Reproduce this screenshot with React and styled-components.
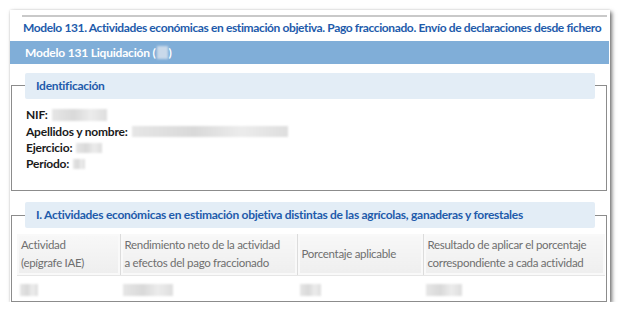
import React from 'react';
import styled, { createGlobalStyle } from 'styled-components';

const GlobalStyle = createGlobalStyle`
  html, body {
    margin: 0;
    padding: 0;
    background: #ffffff;
  }
  body {
    font-family: Lato, "Open Sans", "Noto Sans", sans-serif;
  }
`;

const Card = styled.div`
  margin: 10px 0 0 10px;
  width: 600px;
  height: 292px;
  background: #fff;
  box-shadow: 2px 2px 4px rgba(0, 0, 0, 0.55), 0 0 2px rgba(0, 0, 0, 0.12);
  overflow: hidden;
  display: flex;
  flex-direction: column;
`;

const TopRule = styled.div`
  margin: 5px 3px 0 12px;
  height: 2px;
  background: #c9c9c9;
`;

const PageTitle = styled.h1`
  margin: 0;
  padding: 0 0 0 13px;
  height: 25px;
  line-height: 21px;
  font-size: 12px;
  letter-spacing: -0.38px;
  font-weight: 700;
  color: #1e5bab;
  white-space: nowrap;
`;

const Bar = styled.div`
  height: 23px;
  margin-right: 1px;
  background: #80aed8;
  color: #fff;
  font-size: 12px;
  letter-spacing: -0.2px;
  font-weight: 700;
  line-height: 23px;
  padding-left: 15px;
  display: flex;
  align-items: center;
`;

const Blur = styled.span`
  display: inline-block;
  width: ${p => p.$w}px;
  height: ${p => p.$h || 11}px;
  margin: ${p => p.$m || '0'};
  background: ${p => p.$bg || 'linear-gradient(90deg, #e6e6e6, #d9d9d9 40%, #ececec 70%, #dedede)'};
  filter: blur(0.8px);
  vertical-align: middle;
`;

const Fieldset = styled.fieldset`
  margin: ${p => p.$mt}px 3px 0 1px;
  padding: 0;
  border: 1px solid #8c8c8c;
  min-width: 0;
  height: ${p => p.$h}px;
  box-sizing: border-box;
`;

const Legend = styled.legend`
  box-sizing: border-box;
  width: 570px;
  height: 26px;
  margin-left: 13px;
  padding: 0 0 0 11px;
  background: #e3edf6;
  border-radius: 2px;
  color: #1e5bab;
  font-size: 12px;
  letter-spacing: -0.28px;
  font-weight: 700;
  line-height: 26px;
`;

const Fields = styled.div`
  padding: 8px 0 0 14px;
  display: flex;
  flex-direction: column;
`;

const Field = styled.div`
  height: 16px;
  margin-top: ${p => p.$mt || 0}px;
  display: flex;
  align-items: center;
  font-size: 12px;
  letter-spacing: -0.2px;
  font-weight: 700;
  color: #1a1a1a;
`;

const Label = styled.span`
  margin-right: 4px;
`;

const Table = styled.table`
  width: 588px;
  margin: 6px 0 0 5px;
  border-collapse: collapse;
  table-layout: fixed;
  font-size: 11.5px;
  letter-spacing: -0.3px;
  color: #6f6f6f;
`;

const HeadCell = styled.th`
  box-sizing: border-box;
  width: ${p => p.$w}px;
  height: 41px;
  padding: 2px 4px;
  text-align: left;
  vertical-align: middle;
  font-weight: 400;
  line-height: 18px;
  white-space: nowrap;
  background: linear-gradient(#f8f8f8, #eeeeee);
  border-left: 1px solid #dcdcdc;
  border-bottom: 1px solid #e6e6e6;
  box-shadow: inset 0 0 0 2px #f9f9f9;
  &:first-child { border-left: none; }
`;

const Cell = styled.td`
  height: 26px;
  padding: 0 3px;
  vertical-align: middle;
`;

const columns = [
  { w: 103, text: ['Actividad', '(epígrafe IAE)'], blur: 18 },
  { w: 177, text: ['Rendimiento neto de la actividad', 'a efectos del pago fraccionado'], blur: 50 },
  { w: 126, text: ['Porcentaje aplicable'], blur: 21 },
  { w: 182, text: ['Resultado de aplicar el porcentaje', 'correspondiente a cada actividad'], blur: 36 },
];

export default function App() {
  return (
    <>
      <GlobalStyle />
      <Card>
        <TopRule />
        <PageTitle>
          Modelo 131. Actividades económicas en estimación objetiva. Pago fraccionado. Envío de declaraciones desde fichero
        </PageTitle>
        <Bar>
          Modelo 131 Liquidación (
          <Blur $w={11} $h={13} $m="0 1px" $bg="#c9d9ea" />
          )
        </Bar>

        <Fieldset $mt={9} $h={123}>
          <Legend>Identificación</Legend>
          <Fields>
            <Field>
              <Label>NIF:</Label>
              <Blur $w={55} $h={12} />
            </Field>
            <Field $mt={1}>
              <Label>Apellidos y nombre:</Label>
              <Blur $w={156} />
            </Field>
            <Field>
              <Label>Ejercicio:</Label>
              <Blur $w={26} $h={10} />
            </Field>
            <Field>
              <Label>Período:</Label>
              <Blur $w={12} $h={10} />
            </Field>
          </Fields>
        </Fieldset>

        <Fieldset $mt={11} $h={100}>
          <Legend>I. Actividades económicas en estimación objetiva distintas de las agrícolas, ganaderas y forestales</Legend>
          <Table>
            <thead>
              <tr>
                {columns.map(c => (
                  <HeadCell key={c.text[0]} $w={c.w}>
                    {c.text[0]}
                    {c.text[1] && <br />}
                    {c.text[1]}
                  </HeadCell>
                ))}
              </tr>
            </thead>
            <tbody>
              <tr>
                {columns.map(c => (
                  <Cell key={c.text[0]}>
                    <Blur $w={c.blur} $h={12} />
                  </Cell>
                ))}
              </tr>
            </tbody>
          </Table>
        </Fieldset>
      </Card>
    </>
  );
}
